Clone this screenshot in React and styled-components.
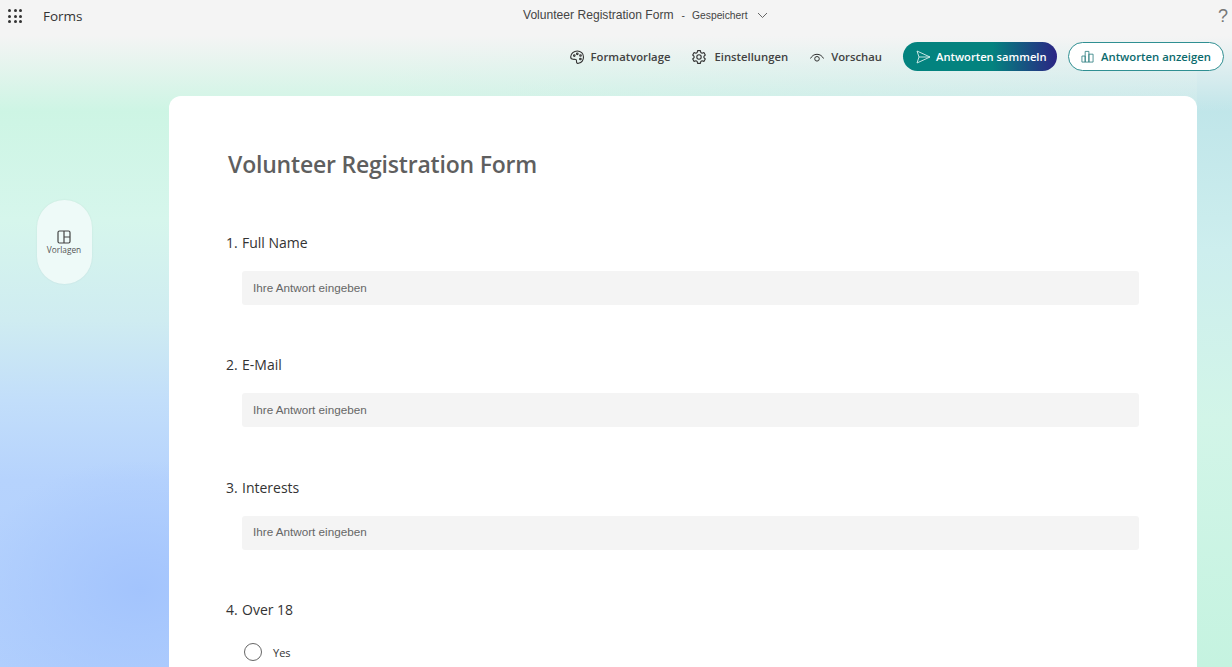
import React from 'react';
import styled, { createGlobalStyle } from 'styled-components';

const GlobalStyle = createGlobalStyle`
    html, body {
        margin: 0;
        padding: 0;
        height: 100%;
        overflow: hidden;
    }
    body {
        font-family: "Open Sans", "Noto Sans", sans-serif;
    }
`;

const Page = styled.div`
    width: 1232px;
    height: 667px;
    overflow: hidden;
    display: flex;
    flex-direction: column;
    background:
        linear-gradient(180deg, #f4f4f4 0px, #f4f4f4 36px, rgba(244, 244, 244, 0) 112px),
        linear-gradient(180deg, #bfe5e9 100px, #cdeeee 250px, #d2f5e8 420px, #c5f3e0 667px) right top / 35px 100% no-repeat,
        linear-gradient(90deg, rgba(198, 232, 234, 0) 30%, #c6e8ea 100%) left top / 100% 110px no-repeat,
        radial-gradient(ellipse 170px 130px at 140px 590px, #a3c4fd 0%, rgba(163, 196, 253, 0) 100%),
        linear-gradient(180deg, #cdf5e4 110px, #d6f6ec 220px, #cfecf1 320px, #c2defa 400px, #b6d3fd 480px, #b0cefd 667px);
`;

const Header = styled.header`
    height: 96px;
    flex-shrink: 0;
    display: flex;
    flex-direction: column;
    position: relative;
`;

const TopBar = styled.div`
    height: 32px;
    display: grid;
    grid-template-columns: 523px auto 1fr;
    align-items: center;
`;

const Brand = styled.div`
    display: flex;
    align-items: center;
    padding-left: 8px;
    gap: 21px;
`;

const Waffle = styled.div`
    display: grid;
    grid-template-columns: repeat(3, 3px);
    gap: 2.5px;
`;

const Dot = styled.span`
    width: 3px;
    height: 3px;
    border-radius: 50%;
    background: #333;
`;

const AppName = styled.span`
    font-size: 13.5px;
    font-weight: 500;
    color: #333;
`;

const TitleGroup = styled.div`
    display: flex;
    align-items: center;
    font-family: "Liberation Sans", sans-serif;
    color: #444;
    margin-top: -2px;
`;

const DocTitle = styled.span`
    font-size: 12.1px;
`;

const Separator = styled.span`
    font-size: 10.3px;
    margin: 0 7px 0 8px;
`;

const SavedState = styled.span`
    font-size: 10.3px;
    margin-right: 9px;
`;

const HelpMark = styled.span`
    justify-self: end;
    font-family: "Liberation Sans", sans-serif;
    font-size: 18px;
    line-height: 18px;
    color: #777;
    padding-right: 4px;
`;

const ActionBar = styled.div`
    display: flex;
    justify-content: flex-end;
    align-items: center;
    margin-top: 10px;
    padding-right: 8px;
`;

const ActionLink = styled.button`
    display: flex;
    align-items: center;
    gap: ${(p) => p.$gap || 6}px;
    margin-right: 21px;
    padding: 0;
    border: 0;
    background: none;
    font: 600 11.3px "Open Sans", sans-serif;
    color: #424242;
`;

const PrimaryButton = styled.button`
    display: flex;
    align-items: center;
    gap: 5px;
    width: 154px;
    height: 29px;
    box-sizing: border-box;
    padding: 0 0 0 12px;
    margin-right: 11px;
    border: 0;
    border-radius: 15px;
    background: linear-gradient(90deg, #03837f 0%, #03837f 58%, #2b2484 100%);
    font: 600 11.2px "Open Sans", sans-serif;
    color: #fff;
`;

const OutlineButton = styled.button`
    display: flex;
    align-items: center;
    gap: 7px;
    width: 156px;
    height: 29px;
    box-sizing: border-box;
    padding: 0 0 0 12px;
    border: 1px solid #2f8f92;
    border-radius: 15px;
    background: #fff;
    font: 600 11.3px "Open Sans", sans-serif;
    color: #0b6a6d;
`;

const Body = styled.div`
    flex: 1;
    display: flex;
    min-height: 0;
`;

const Rail = styled.aside`
    width: 169px;
    flex-shrink: 0;
    padding: 104px 0 0 37px;
    box-sizing: border-box;
`;

const TemplatePill = styled.button`
    width: 55px;
    height: 84px;
    padding: 1px 1px 0 0;
    border: 0;
    border-radius: 28px;
    background: #eefaf8;
    box-shadow: 0 0 2px rgba(0, 0, 0, 0.08);
    display: flex;
    flex-direction: column;
    align-items: center;
    justify-content: center;
    font: 400 8.3px "Open Sans", sans-serif;
    color: #555;
`;

const Card = styled.main`
    width: 1028px;
    flex-shrink: 0;
    box-sizing: border-box;
    padding: 51px 58px 0 57px;
    background: #fff;
    border-radius: 12px 12px 0 0;
`;

const FormTitle = styled.h1`
    margin: 0 0 52px 2px;
    font-size: 23px;
    line-height: 34px;
    font-weight: 600;
    color: #5f5f5f;
    letter-spacing: -0.2px;
`;

const Question = styled.section`
    margin-bottom: 50.4px;
`;

const QuestionLabel = styled.div`
    display: flex;
    font-size: 14px;
    line-height: 20px;
    color: #333;
`;

const QuestionNumber = styled.span`
    width: 16px;
`;

const AnswerInput = styled.div`
    margin: 18px 0 0 16px;
    height: 34px;
    box-sizing: border-box;
    display: flex;
    align-items: center;
    padding: 0 0 2px 11px;
    border-radius: 3px;
    background: #f4f4f4;
    font: 400 11.7px "Liberation Sans", sans-serif;
    color: #666;
`;

const Option = styled.label`
    display: flex;
    align-items: center;
    gap: 11px;
    margin: 23px 0 0 18px;
    font-size: 11px;
    color: #333;
`;

const Radio = styled.span`
    width: 16px;
    height: 16px;
    border: 1px solid #666;
    border-radius: 50%;
    background: #fff;
`;

const questions = ['Full Name', 'E-Mail', 'Interests'];

const PaletteIcon = () => (
    <svg width="16" height="16" viewBox="0 0 16 16" fill="none" stroke="#333" strokeWidth="1.100">
        <path d="M9.500 14.300c-.9.3-1.700-.1-1.900-1-.2-1 .1-1.900-.5-2.600-.7-.7-1.800-.2-2.900-.4C2.700 10.100 1.600 9.300 1.700 7.700 1.900 4.500 4.800 2 8.300 2c3.500 0 6.200 2.600 6.200 5.900 0 3-2.100 5.600-5 6.400z" />
        <circle cx="5.300" cy="6.600" r="0.8" />
        <circle cx="8.300" cy="4.800" r="0.8" />
        <circle cx="11.500" cy="6.500" r="0.8" />
        <circle cx="11.400" cy="10" r="0.8" />
    </svg>
);

const GearIcon = () => (
    <svg width="16" height="16" viewBox="0 0 16 16" fill="none" stroke="#333" strokeWidth="1.100" strokeLinejoin="round">
        <path d="M6.600 1.600h2.800l.4 1.900 1.300.7 1.800-.6 1.400 2.400-1.400 1.300v1.400l1.400 1.300-1.400 2.400-1.800-.6-1.300.7-.4 1.900H6.600l-.4-1.900-1.300-.7-1.800.6-1.400-2.400 1.400-1.300V7.300L1.700 6l1.400-2.400 1.800.6 1.300-.7z" />
        <circle cx="8" cy="8" r="2.200" />
    </svg>
);

const EyeIcon = () => (
    <svg width="16" height="16" viewBox="0 0 15 16" fill="none" stroke="#333" strokeWidth="1">
        <path d="M1 9.500C2.300 6.900 4.600 5.300 7.500 5.300S12.700 6.900 14 9.500" />
        <circle cx="7.500" cy="9.800" r="2.300" />
    </svg>
);

const SendIcon = () => (
    <svg width="16" height="16" viewBox="0 0 16 16" fill="none" stroke="#d8eeec" strokeWidth="0.900" strokeLinejoin="round">
        <path d="M2 2l13 6-13 6 2-6zM4 8h11" />
    </svg>
);

const ChartIcon = () => (
    <svg width="13" height="13" viewBox="0 0 14 14" fill="none" stroke="#2f8082" strokeWidth="0.900">
        <path d="M1 6.500h3.500V13H1zM4.500 1.500h4V13h-4zM8.500 4.500H13V13H8.500z" />
    </svg>
);

const TemplateIcon = () => (
    <svg width="14" height="14" viewBox="0 0 14 14" fill="none" stroke="#444" strokeWidth="1.200">
        <rect x="1" y="1" width="12" height="12" rx="1.500" />
        <path d="M7 1v12M7 7h6" />
    </svg>
);

const ChevronIcon = () => (
    <svg width="11" height="7" viewBox="0 0 11 7" fill="none" stroke="#555" strokeWidth="0.900">
        <path d="M1 1l4.500 4.500L10 1" />
    </svg>
);

const App = () => {
    return (
        <>
            <GlobalStyle />
            <Page>
                <Header>
                    <TopBar>
                        <Brand>
                            <Waffle>
                                {Array.from({ length: 9 }).map((_, i) => (
                                    <Dot key={i} />
                                ))}
                            </Waffle>
                            <AppName>Forms</AppName>
                        </Brand>
                        <TitleGroup>
                            <DocTitle>Volunteer Registration Form</DocTitle>
                            <Separator>-</Separator>
                            <SavedState>Gespeichert</SavedState>
                            <ChevronIcon />
                        </TitleGroup>
                        <HelpMark>?</HelpMark>
                    </TopBar>
                    <ActionBar>
                        <ActionLink>
                            <PaletteIcon />
                            Formatvorlage
                        </ActionLink>
                        <ActionLink $gap={7}>
                            <GearIcon />
                            Einstellungen
                        </ActionLink>
                        <ActionLink>
                            <EyeIcon />
                            Vorschau
                        </ActionLink>
                        <PrimaryButton>
                            <SendIcon />
                            Antworten sammeln
                        </PrimaryButton>
                        <OutlineButton>
                            <ChartIcon />
                            Antworten anzeigen
                        </OutlineButton>
                    </ActionBar>
                </Header>
                <Body>
                    <Rail>
                        <TemplatePill>
                            <TemplateIcon />
                            Vorlagen
                        </TemplatePill>
                    </Rail>
                    <Card>
                        <FormTitle>Volunteer Registration Form</FormTitle>
                        {questions.map((q, i) => (
                            <Question key={q}>
                                <QuestionLabel>
                                    <QuestionNumber>{i + 1}.</QuestionNumber>
                                    {q}
                                </QuestionLabel>
                                <AnswerInput>Ihre Antwort eingeben</AnswerInput>
                            </Question>
                        ))}
                        <Question>
                            <QuestionLabel>
                                <QuestionNumber>4.</QuestionNumber>
                                Over 18
                            </QuestionLabel>
                            <Option>
                                <Radio />
                                Yes
                            </Option>
                        </Question>
                    </Card>
                </Body>
            </Page>
        </>
    );
};

export default App;
